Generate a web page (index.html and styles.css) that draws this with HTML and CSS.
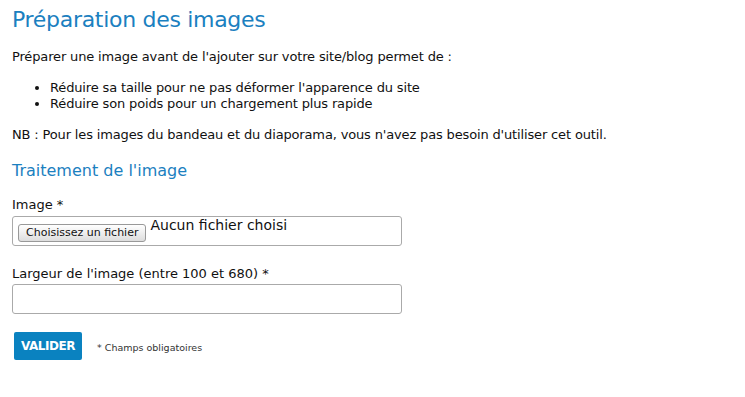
FILE: index.html
```html
<!DOCTYPE html>
<html>
<head>
    <title>Préparation des images</title>
    <link rel="stylesheet" href="styles.css">
</head>
<body>
    <div class="page">
        <h1>Préparation des images</h1>
        <p>Préparer une image avant de l'ajouter sur votre site/blog permet de :</p>
        <ul>
            <li>Réduire sa taille pour ne pas déformer l'apparence du site</li>
            <li>Réduire son poids pour un chargement plus rapide</li>
        </ul>
        <p>NB : Pour les images du bandeau et du diaporama, vous n'avez pas besoin d'utiliser cet outil.</p>

        <h2>Traitement de l'image</h2>
        <form id="resizeForm">
            <label class="field-label first">Image *</label>
            <div class="file-box">
                <span class="file-btn">Choisissez un fichier</span>
                <span class="file-name">Aucun fichier choisi</span>
            </div>

            <label class="field-label" for="largeur">Largeur de l'image (entre 100 et 680) *</label>
            <input type="text" id="largeur" class="text-input">

            <div class="actions">
                <button type="submit" class="submit-btn">VALIDER</button>
                <span class="note">* Champs obligatoires</span>
            </div>
        </form>
    </div>
</body>
</html>
```

FILE: styles.css
```css
body {
    margin: 0;
    font-family: "DejaVu Sans", Verdana, sans-serif;
    font-size: 13px;
    color: #111;
    background: #fff;
}
.page {
    padding: 6px 12px;
}
h1 {
    margin: 0 0 15px 0;
    font-size: 22px;
    line-height: 28px;
    font-weight: normal;
    color: #1b80c0;
    letter-spacing: -0.3px;
}
p {
    margin: 0 0 15px 0;
    line-height: 16px;
    letter-spacing: -0.15px;
}
ul {
    margin: 0 0 15px 0;
    padding-left: 38px;
    line-height: 16px;
    letter-spacing: -0.15px;
}
h2 {
    margin: 17px 0 15px 0;
    font-size: 16px;
    line-height: 22px;
    font-weight: normal;
    color: #1b80c0;
}
.field-label {
    display: block;
    margin-bottom: 2px;
    line-height: 16px;
}
.field-label.first {
    margin-bottom: 3px;
}
.file-box {
    width: 388px;
    height: 28px;
    border: 1px solid #aaa;
    border-radius: 3px;
    display: flex;
    align-items: flex-start;
    margin-bottom: 20px;
}
.file-btn {
    margin: 7px 0 0 5px;
    height: 16px;
    line-height: 16px;
    padding: 0 7px;
    font-size: 11px;
    border: 1px solid #999;
    border-radius: 3px;
    background: linear-gradient(#fff, #ddd);
}
.file-name {
    margin: 0 0 0 4px;
    font-size: 14px;
    line-height: 16px;
}
.text-input {
    display: block;
    box-sizing: border-box;
    width: 390px;
    height: 30px;
    border: 1px solid #aaa;
    border-radius: 3px;
    margin: 0 0 18px 0;
}
.actions {
    display: flex;
    align-items: center;
    gap: 15px;
}
.submit-btn {
    margin-left: 2px;
    background-color: #0a82c0;
    color: #fff;
    border: none;
    border-radius: 2px;
    padding: 0 7px;
    font-family: inherit;
    font-size: 12px;
    font-weight: bold;
    letter-spacing: -0.5px;
    height: 28px;
    width: 68px;
}
.note {
    font-size: 9.5px;
    color: #333;
    margin-top: 2px;
}
```
